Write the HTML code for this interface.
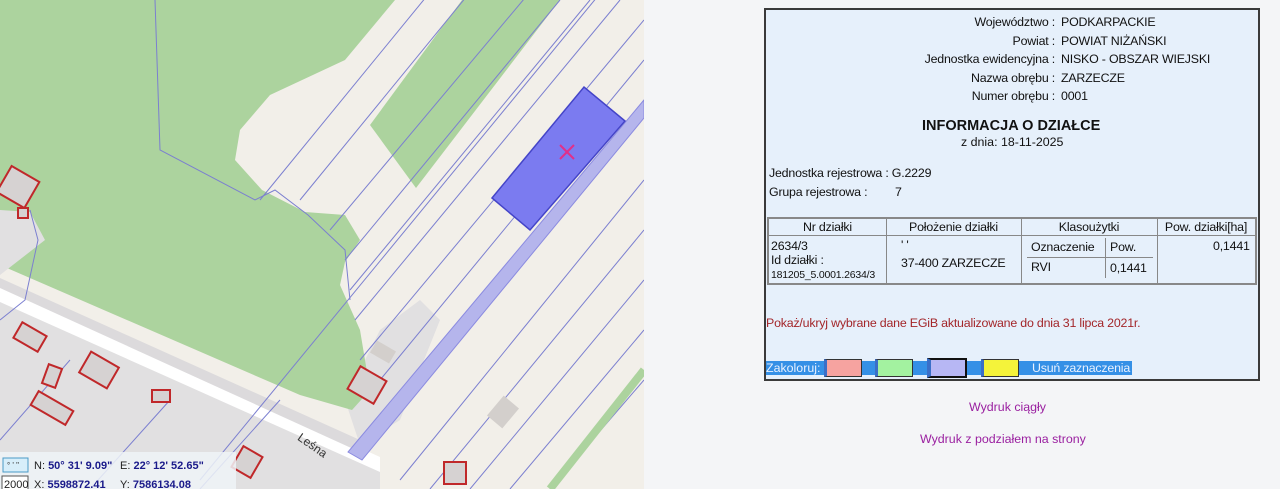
<!DOCTYPE html>
<html><head><meta charset="utf-8"><style>
*{margin:0;padding:0;box-sizing:border-box}
body{width:1280px;height:489px;overflow:hidden;background:#f4f5f7;font-family:"Liberation Sans",Arial,sans-serif;position:relative;font-size:12.4px;color:#111}
.a{position:absolute;white-space:nowrap}
#panel{position:absolute;left:764px;top:8px;width:496px;height:373px;background:#e6f0fb;border:2px solid #3a3a3a}
</style></head><body>
<svg class="a" style="left:0;top:0" width="644" height="489" viewBox="0 0 644 489">
<rect width="644" height="489" fill="#f2efe9"/>
<polygon points="0,300 380,470 380,489 0,489" fill="#e1e0e1"/>
<polygon points="345,400 380,330 420,300 440,320 400,420 360,445" fill="#e1e0e1"/>
<polygon points="0,0 395,0 345,60 270,95 240,130 235,160 262,190 305,212 345,215 360,240 345,262 340,285 360,330 370,390 352,410 300,395 0,265" fill="#acd39e"/>
<polygon points="370,125 462,0 560,0 416,188" fill="#acd39e"/>
<polygon points="0,210 30,212 45,240 0,275" fill="#e1e0e1"/>
<polygon points="0,285 380,457 380,472 0,302" fill="#fff"/>
<polygon points="0,278 360,440 360,452 0,288" fill="#dcdadc"/>
<g stroke="#7b7fd0" stroke-width="1" fill="none">
<line x1="200" y1="480" x2="644" y2="-60"/>
<line x1="260" y1="200" x2="440" y2="-20"/>
<line x1="300" y1="200" x2="480" y2="-20"/>
<line x1="330" y1="230" x2="540" y2="-20"/>
<line x1="345" y1="260" x2="560" y2="0"/>
<line x1="350" y1="290" x2="590" y2="0"/>
<line x1="355" y1="320" x2="620" y2="0"/>
<line x1="360" y1="360" x2="644" y2="20"/>
<line x1="380" y1="380" x2="644" y2="60"/>
<line x1="400" y1="400" x2="644" y2="100"/>
<line x1="400" y1="480" x2="644" y2="180"/>
<line x1="430" y1="489" x2="644" y2="230"/>
<line x1="470" y1="489" x2="644" y2="280"/>
<line x1="510" y1="489" x2="644" y2="330"/>
<line x1="550" y1="489" x2="644" y2="380"/>
<polyline points="155,0 160,150 255,200 275,190 308,215 345,250 350,300"/>
<polyline points="0,320 25,300 38,240 30,210"/>
<line x1="0" y1="440" x2="70" y2="360"/>
<line x1="90" y1="489" x2="170" y2="400"/>
<line x1="200" y1="489" x2="280" y2="400"/>
</g>
<polygon points="644,100 644,118 362,460 348,452" fill="#b5b5ec" stroke="#8b8be0"/>
<polygon points="492,198 584,87 625,121 530,230" fill="#7b7bf0" stroke="#4444c8" stroke-width="1.5"/>
<g stroke="#e0308a" stroke-width="2"><line x1="560" y1="145" x2="574" y2="159"/><line x1="574" y1="145" x2="560" y2="159"/></g>
<g fill="#d6d2d2" stroke="#c0282a" stroke-width="2">
<rect x="2" y="172" width="32" height="30" transform="rotate(30 18 187)"/>
<rect x="18" y="208" width="10" height="10"/>
<rect x="16" y="328" width="28" height="18" transform="rotate(30 30 337)"/>
<rect x="45" y="366" width="14" height="20" transform="rotate(20 52 376)"/>
<rect x="83" y="358" width="32" height="24" transform="rotate(30 99 370)"/>
<rect x="32" y="400" width="40" height="16" transform="rotate(30 52 408)"/>
<rect x="152" y="390" width="18" height="12"/>
<rect x="352" y="372" width="30" height="26" transform="rotate(30 367 385)"/>
<rect x="236" y="450" width="22" height="24" transform="rotate(30 247 462)"/>
<rect x="444" y="462" width="22" height="22"/>
</g>
<rect x="372" y="345" width="22" height="14" fill="#d3cfcc" transform="rotate(30 383 352)"/>
<rect x="490" y="402" width="26" height="20" fill="#d3cfcc" transform="rotate(-50 503 412)"/>
<line x1="550" y1="489" x2="644" y2="370" stroke="#acd39e" stroke-width="8"/>
<text x="295" y="445" font-size="12" fill="#333" transform="rotate(35 305 445)" font-family="Liberation Sans">Leśna</text>
<rect x="0" y="452" width="236" height="37" fill="#eef3f7" opacity="0.85"/>
<rect x="3" y="458" width="25" height="14" fill="#d7eefa" stroke="#4a9ac7"/>
<text x="7" y="468" font-size="8" fill="#333">° ' "</text>
<rect x="2" y="476" width="26" height="15" fill="#fff" stroke="#555"/>
<text x="4" y="488" font-size="11" fill="#222">2000</text>
<g font-size="11" fill="#222"><text x="34" y="469">N: <tspan fill="#1a1a8a" font-weight="bold">50° 31' 9.09"</tspan></text>
<text x="120" y="469">E: <tspan fill="#1a1a8a" font-weight="bold">22° 12' 52.65"</tspan></text>
<text x="34" y="488">X: <tspan fill="#1a1a8a" font-weight="bold">5598872.41</tspan></text>
<text x="120" y="488">Y: <tspan fill="#1a1a8a" font-weight="bold">7586134.08</tspan></text></g>
</svg>
<div id="panel"></div>
<div class="a" style="left:0;top:13px;width:1055px;text-align:right;line-height:18.5px;letter-spacing:-0.2px">Województwo :<br>Powiat :<br>Jednostka ewidencyjna :<br>Nazwa obrębu :<br>Numer obrębu :</div>
<div class="a" style="left:1061px;top:13px;line-height:18.5px;letter-spacing:-0.2px">PODKARPACKIE<br>POWIAT NIŻAŃSKI<br>NISKO - OBSZAR WIEJSKI<br>ZARZECZE<br>0001</div>
<div class="a" style="left:922px;top:118px;font-weight:bold;font-size:14.5px">INFORMACJA O DZIAŁCE</div>
<div class="a" style="left:961px;top:135px">z dnia: 18-11-2025</div>
<div class="a" style="left:769px;top:166px;letter-spacing:-0.2px">Jednostka rejestrowa : G.2229</div>
<div class="a" style="left:769px;top:185px;letter-spacing:-0.2px">Grupa rejestrowa :</div>
<div class="a" style="left:895px;top:185px">7</div>
<div class="a" style="left:767px;top:217px;width:490px;height:68px;border:2px solid #888;"></div>
<div class="a" style="left:769px;top:219px;width:486px;height:64px;letter-spacing:-0.2px">
<div class="a" style="left:0;top:0;width:486px;height:17px;border-bottom:1px solid #888"></div>
<div class="a" style="left:117px;top:0;width:1px;height:64px;background:#888"></div>
<div class="a" style="left:252px;top:0;width:1px;height:64px;background:#888"></div>
<div class="a" style="left:388px;top:0;width:1px;height:64px;background:#888"></div>
<div class="a" style="left:0;top:1px;width:117px;text-align:center">Nr działki</div>
<div class="a" style="left:117px;top:1px;width:135px;text-align:center">Położenie działki</div>
<div class="a" style="left:252px;top:1px;width:136px;text-align:center">Klasoużytki</div>
<div class="a" style="left:388px;top:1px;width:98px;text-align:center">Pow. działki[ha]</div>
<div class="a" style="left:2px;top:20px;line-height:14px">2634/3<br>Id działki :<br><span style="font-size:10.5px">181205_5.0001.2634/3</span></div>
<div class="a" style="left:132px;top:19px">' '</div>
<div class="a" style="left:132px;top:37px">37-400 ZARZECZE</div>
<div class="a" style="left:262px;top:21px">Oznaczenie</div>
<div class="a" style="left:341px;top:21px">Pow.</div>
<div class="a" style="left:336px;top:19px;width:1px;height:40px;background:#888"></div>
<div class="a" style="left:258px;top:38px;width:126px;height:1px;background:#888"></div>
<div class="a" style="left:262px;top:41px">RVI</div>
<div class="a" style="left:341px;top:42px">0,1441</div>
<div class="a" style="left:444px;top:20px">0,1441</div>
</div>
<div class="a" style="left:766px;top:316px;color:#a3262a;letter-spacing:-0.2px">Pokaż/ukryj wybrane dane EGiB aktualizowane do dnia 31 lipca 2021r.</div>
<div class="a" style="left:766px;top:361px;width:366px;height:14px;background:#3590e6"></div>
<div class="a" style="left:766px;top:361px;color:#e8f1ff;line-height:14px">Zakoloruj:</div>
<div class="a" style="left:824px;top:359px;width:38px;height:18px;background:#f6a3a0;border:1px solid #333;border-left:3px solid #3b6fc8"></div>
<div class="a" style="left:875px;top:359px;width:38px;height:18px;background:#a3f2a0;border:1px solid #333;border-left:3px solid #3b6fc8"></div>
<div class="a" style="left:927px;top:358px;width:40px;height:20px;background:#b7b7f4;border:2px solid #111;border-left:4px solid #3b6fc8"></div>
<div class="a" style="left:981px;top:359px;width:38px;height:18px;background:#f4f33a;border:1px solid #333;border-left:3px solid #3b6fc8"></div>
<div class="a" style="left:1032px;top:361px;color:#e8f1ff;line-height:14px;letter-spacing:-0.2px">Usuń zaznaczenia</div>
<div class="a" style="left:969px;top:400px;color:#9a1fa0">Wydruk ciągły</div>
<div class="a" style="left:920px;top:432px;color:#9a1fa0">Wydruk z podziałem na strony</div>
</body></html>
